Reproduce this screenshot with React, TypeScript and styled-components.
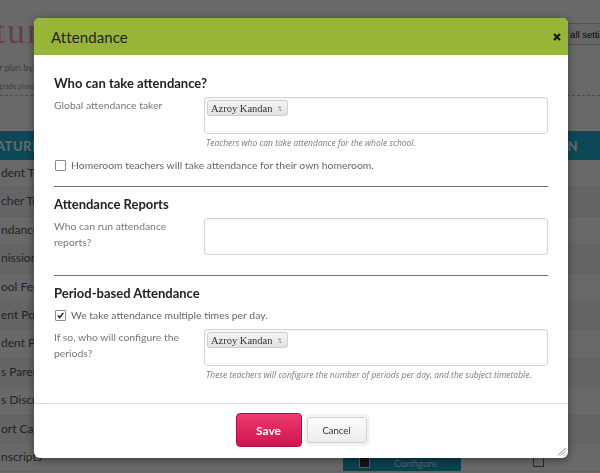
import React from 'react';
import styled, { createGlobalStyle } from 'styled-components';

const GlobalStyle = createGlobalStyle`
  html, body {
    margin: 0;
    padding: 0;
  }
  body {
    font-family: Lato, "Liberation Sans", sans-serif;
    width: 600px;
    height: 473px;
    overflow: hidden;
    background: #fff;
  }
`;

/* ---------- page behind the dialog ---------- */

const Page = styled.div`
  width: 600px;
  height: 473px;
  display: flex;
  flex-direction: column;
  overflow: hidden;
  background: #fff;
`;

const TopArea = styled.div`
  height: 95px;
  display: flex;
  justify-content: space-between;
  align-items: flex-start;
  border-bottom: 1px dashed #b8b8b8;
`;

const Brand = styled.div`
  display: flex;
  flex-direction: column;
  padding-top: 12px;
  margin-left: -5px;
`;

const BrandTitle = styled.div`
  font-family: "Liberation Serif", serif;
  font-size: 36px;
  line-height: 38px;
  letter-spacing: 2px;
  color: #f29cbb;
`;

const BrandSub = styled.div<{ $size: number; $top: number }>`
  font-size: ${({ $size }) => $size}px;
  line-height: 16px;
  margin-top: ${({ $top }) => $top}px;
  color: #999;
  padding-left: 4px;
  white-space: nowrap;
`;

const SettingsButton = styled.div`
  margin-top: 23px;
  margin-right: -22px;
  height: 22px;
  box-sizing: border-box;
  display: flex;
  align-items: center;
  padding: 0 6px 0 3px;
  border: 1px solid #ccc;
  border-radius: 3px;
  background: #f7f7f7;
  font-family: "Liberation Sans", sans-serif;
  font-size: 9.5px;
  color: #222;
  white-space: nowrap;
`;

const TealBar = styled.div`
  margin-top: 35px;
  height: 29px;
  background: #1fb0d4;
  display: flex;
  align-items: center;
  justify-content: space-between;
  color: #fff;
  font-weight: 700;
  font-size: 13px;
  letter-spacing: 0.5px;
  padding-right: 22px;
  overflow: hidden;
`;

const TealLeft = styled.span`
  margin-left: -4px;
`;

const Row = styled.div<{ $alt: boolean }>`
  height: 28.4px;
  flex-shrink: 0;
  display: grid;
  grid-template-columns: 343px 118px 72px 1fr;
  background: ${({ $alt }) => ($alt ? '#f5f5f5' : '#fff')};
  border-bottom: 1px solid #eee;
  box-sizing: border-box;
`;

const RowLabel = styled.div`
  font-size: 12px;
  color: #555;
  line-height: 26px;
  white-space: nowrap;
  padding-left: 1px;
`;

const ConfigureCell = styled.div`
  margin-top: 10px;
  background: #1a9ec0;
  display: flex;
  align-items: center;
  gap: 24px;
  padding-left: 16px;
  color: #cfeaf2;
  font-size: 10px;
`;

const TinyBox = styled.span<{ $dark?: boolean }>`
  width: 9px;
  height: 9px;
  border: 1px solid ${({ $dark }) => ($dark ? '#ddd' : '#666')};
  background: ${({ $dark }) => ($dark ? '#333' : '#fff')};
  display: inline-block;
  margin-top: ${({ $dark }) => ($dark ? 0 : 12)}px;
`;

/* ---------- dialog ---------- */

const Overlay = styled.div`
  position: fixed;
  inset: 0;
  background: rgba(0, 0, 0, 0.59);
`;

const Modal = styled.div`
  position: absolute;
  left: 34px;
  top: 18px;
  width: 534px;
  height: 440px;
  background: #fff;
  border-radius: 6px;
  box-shadow: 0 2px 10px rgba(0, 0, 0, 0.45);
  overflow: hidden;
  display: flex;
  flex-direction: column;
`;

const Header = styled.div`
  height: 37px;
  flex-shrink: 0;
  background: #97b637;
  display: flex;
  align-items: center;
  justify-content: space-between;
  padding: 0 7px 0 17px;
`;

const Title = styled.h2`
  margin: 0;
  font-size: 15px;
  font-weight: 400;
  color: #222;
  letter-spacing: 0.1px;
`;

const CloseButton = styled.button`
  border: none;
  background: none;
  padding: 0;
  width: 8px;
  height: 8px;
  display: flex;
  margin-top: 1px;
`;

const Body = styled.div`
  padding: 20px 20px 0;
  flex: 1;
`;

const SectionHeading = styled.h3`
  margin: 0 0 6px;
  font-size: 13px;
  line-height: 16px;
  font-weight: 700;
  color: #222;
`;

const FieldRow = styled.div<{ $top?: number }>`
  display: grid;
  grid-template-columns: 150px 1fr;
  margin-top: ${({ $top }) => $top ?? 0}px;
`;

const FieldLabel = styled.label`
  font-size: 10.4px;
  line-height: 16px;
  color: #777;
  padding-right: 22px;
`;

const InputBox = styled.div<{ $height: number }>`
  height: ${({ $height }) => $height}px;
  box-sizing: border-box;
  border: 1px solid #d4d4d4;
  border-radius: 3px;
  padding: 2px;
  box-shadow: inset 0 1px 2px rgba(0, 0, 0, 0.05);
  display: flex;
  align-items: flex-start;
`;

const Tag = styled.span`
  display: inline-flex;
  align-items: center;
  gap: 5px;
  height: 16px;
  box-sizing: border-box;
  padding: 0 5px 0 3px;
  background: linear-gradient(#f4f4f4, #e3e3e3);
  border: 1px solid #ccc;
  border-radius: 3px;
  font-family: "Liberation Serif", serif;
  font-size: 10.5px;
  color: #333;

  span {
    color: #999;
    font-size: 9.5px;
  }
`;

const HelpText = styled.div`
  margin-top: 3px;
  font-size: 8.5px;
  line-height: 11px;
  font-style: italic;
  color: #7a7a7a;
  padding-left: 2px;
  font-family: "Open Sans", sans-serif;
  white-space: nowrap;
`;

const CheckRow = styled.label<{ $top: number }>`
  display: flex;
  align-items: center;
  gap: 5px;
  margin-top: ${({ $top }) => $top}px;
  font-size: 10.4px;
  line-height: 16px;
  color: #666;
  padding-left: 1px;
`;

const CheckBox = styled.span`
  width: 9px;
  height: 9px;
  border: 1px solid #8a8a8a;
  border-radius: 1px;
  background: #fff;
  display: flex;
  align-items: center;
  justify-content: center;
`;

const Divider = styled.hr<{ $top: number }>`
  border: none;
  border-top: 1px solid #707070;
  margin: ${({ $top }) => $top}px 0 9px;
`;

const Footer = styled.div`
  border-top: 1px solid #ddd;
  padding: 9px 0 11px;
  display: flex;
  justify-content: center;
  align-items: center;
  gap: 5px;
  position: relative;
`;

const SaveButton = styled.button`
  width: 66px;
  height: 34px;
  border: 1px solid #b40d44;
  border-radius: 4px;
  background: linear-gradient(#ec3a6e, #cf1450);
  color: #fff;
  font-family: Lato, sans-serif;
  font-weight: 700;
  font-size: 12px;
  padding: 0;
`;

const CancelButton = styled.button`
  width: 60px;
  height: 26px;
  border: 1px solid #d0d0d0;
  border-radius: 3px;
  background: linear-gradient(#fdfdfd, #ececec);
  box-shadow: 0 0 0 3px #f4f4f4;
  color: #333;
  font-family: Lato, sans-serif;
  font-size: 9.5px;
  padding: 0;
`;

const Grip = styled.svg`
  position: absolute;
  right: 2px;
  bottom: 2px;
`;

const Check = ({ checked }: { checked?: boolean }) => (
  <CheckBox>
    {checked && (
      <svg width="7" height="7" viewBox="0 0 7 7">
        <path d="M0.8 3.6 L2.7 5.6 L6.3 0.9" fill="none" stroke="#222" strokeWidth="1.5" />
      </svg>
    )}
  </CheckBox>
);

const rows = [
  'dent Tra',
  'cher Tra',
  'ndance',
  'nissions',
  'ool Fees',
  'ent Port',
  'dent Por',
  's Paren',
  's Discu',
  'ort Card',
  'nscripts',
];

const App: React.FC = () => {
  return (
    <>
      <GlobalStyle />
      <Page>
        <TopArea>
          <Brand>
            <BrandTitle>tures</BrandTitle>
            <BrandSub $size={9} $top={10}>r plan by</BrandSub>
            <BrandSub $size={7} $top={2}>grade plans</BrandSub>
          </Brand>
          <SettingsButton>all settings</SettingsButton>
        </TopArea>
        <TealBar>
          <TealLeft>ATURES</TealLeft>
          <span>N</span>
        </TealBar>
        {rows.map((label, i) => (
          <Row key={label} $alt={i % 2 === 1}>
            <RowLabel>{label}</RowLabel>
            {i === rows.length - 1 ? (
              <>
                <ConfigureCell>
                  <TinyBox $dark />
                  Configure
                </ConfigureCell>
                <span />
                <div>
                  <TinyBox />
                </div>
              </>
            ) : null}
          </Row>
        ))}
      </Page>

      <Overlay>
        <Modal>
          <Header>
            <Title>Attendance</Title>
            <CloseButton aria-label="Close">
              <svg width="8" height="8" viewBox="0 0 8 8">
                <path d="M1 1 L7 7 M7 1 L1 7" stroke="#1a1a1a" strokeWidth="2.2" />
              </svg>
            </CloseButton>
          </Header>
          <Body>
            <SectionHeading>Who can take attendance?</SectionHeading>
            <FieldRow>
              <FieldLabel>Global attendance taker</FieldLabel>
              <div>
                <InputBox $height={37}>
                  <Tag>
                    Azroy Kandan <span>x</span>
                  </Tag>
                </InputBox>
                <HelpText>Teachers who can take attendance for the whole school.</HelpText>
              </div>
            </FieldRow>
            <CheckRow $top={9}>
              <Check />
              Homeroom teachers will take attendance for their own homeroom.
            </CheckRow>
            <Divider $top={13} />

            <SectionHeading>Attendance Reports</SectionHeading>
            <FieldRow>
              <FieldLabel>Who can run attendance reports?</FieldLabel>
              <InputBox $height={37} />
            </FieldRow>
            <Divider $top={20} />

            <SectionHeading>Period-based Attendance</SectionHeading>
            <CheckRow $top={0}>
              <Check checked />
              We take attendance multiple times per day.
            </CheckRow>
            <FieldRow $top={6}>
              <FieldLabel>If so, who will configure the periods?</FieldLabel>
              <div>
                <InputBox $height={37}>
                  <Tag>
                    Azroy Kandan <span>x</span>
                  </Tag>
                </InputBox>
                <HelpText>
                  These teachers will configure the number of periods per day, and the subject timetable.
                </HelpText>
              </div>
            </FieldRow>
          </Body>
          <Footer>
            <SaveButton>Save</SaveButton>
            <CancelButton>Cancel</CancelButton>
            <Grip width="9" height="9" viewBox="0 0 9 9">
              <path d="M8.5 1 L1 8.5 M8.5 4 L4 8.5 M8.5 7 L7 8.5" stroke="#777" strokeWidth="0.9" />
            </Grip>
          </Footer>
        </Modal>
      </Overlay>
    </>
  );
};

export default App;
